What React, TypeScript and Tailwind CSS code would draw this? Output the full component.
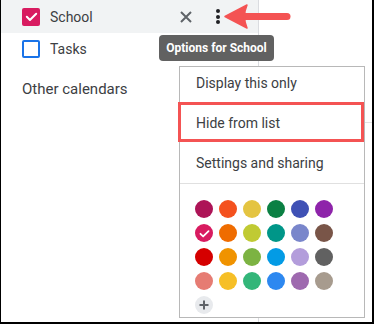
import React from "react";

const swatches = [
  "#ad1457", "#f4511e", "#e4c441", "#0b8043", "#3f51b5", "#8e24aa",
  "#d81b60", "#ef6c00", "#c0ca33", "#009688", "#7986cb", "#795548",
  "#d50000", "#f09300", "#7cb342", "#039be5", "#b39ddb", "#616161",
  "#e67c73", "#f6bf26", "#33b679", "#2d88f0", "#9e69af", "#a79b8e",
];

function Check({ size = 14 }: { size?: number }) {
  return (
    <svg width={size} height={size} viewBox="0 0 24 24" fill="none">
      <path d="M4.5 12.5l5 5L19.5 7.5" stroke="white" strokeWidth="3.2" strokeLinecap="round" strokeLinejoin="round" />
    </svg>
  );
}

export default function App() {
  return (
    <div className="relative w-[374px] h-[324px] overflow-hidden bg-white border-l border-r-2 border-b-2 border-black font-['Roboto',sans-serif] text-[#3c4043]">
      <div className="flex h-full">
        <div className="w-[257px] flex flex-col">
          <div className="h-[33px] bg-[#f1f3f4] flex items-center pl-[21px] pr-[28px]">
            <div className="w-[18px] h-[18px] rounded-[2px] bg-[#d81b60] flex items-center justify-center">
              <Check size={15} />
            </div>
            <span className="ml-[10px] flex-1 text-[14px] leading-[20px]">School</span>
            <div className="w-[24px] h-[24px] flex items-center justify-center">
              <svg width="12" height="12" viewBox="0 0 12 12">
                <path d="M1 1L11 11M11 1L1 11" stroke="#5f6368" strokeWidth="2" />
              </svg>
            </div>
            <div className="ml-[8px] w-[24px] h-[24px] flex flex-col items-center justify-center gap-[1.5px]">
              <span className="w-[4px] h-[4px] rounded-full bg-[#202124]" />
              <span className="w-[4px] h-[4px] rounded-full bg-[#202124]" />
              <span className="w-[4px] h-[4px] rounded-full bg-[#202124]" />
            </div>
          </div>
          <div className="h-[32px] flex items-center pl-[21px]">
            <div className="w-[18px] h-[18px] rounded-[2px] border-2 border-[#1a73e8]" />
            <span className="ml-[10px] text-[14px] leading-[20px]">Tasks</span>
          </div>
          <div className="pt-[14px] pl-[21px] text-[15px] leading-[20px] text-[#3c4043]">Other calendars</div>
        </div>
        <div className="flex-1 flex flex-col border-l border-[#dadce0]">
          <div className="h-[123px] border-b border-[#e3e3e3]" />
        </div>
      </div>

      {/* tooltip */}
      <div className="absolute left-[158px] top-[35px] w-[115px] h-[26px] rounded-[4px] bg-[#616161] text-white text-[12px] font-bold flex items-center justify-center">
        Options for School
      </div>

      {/* red arrow */}
      <svg className="absolute left-[222px] top-[3px]" width="72" height="28" viewBox="0 0 72 28">
        <line x1="20" y1="13.5" x2="64" y2="13.5" stroke="#f45353" strokeWidth="7" strokeLinecap="round" />
        <path d="M2 13.5 L24 2 Q19 13.5 24 25 Z" fill="#f45353" stroke="#f45353" strokeWidth="1.5" strokeLinejoin="round" />
      </svg>

      {/* menu */}
      <div className="absolute left-[178px] top-[66px] w-[186px] h-[252px] bg-white border border-[#b8b8b8] flex flex-col">
        <div className="pl-[16px] pt-[6px] pb-[10px] text-[14px] leading-[20px] text-[#3c4043]">Display this only</div>
        <div className="pl-[16px] py-[10px] text-[14px] leading-[20px] text-[#3c4043]">Hide from list</div>
        <div className="pl-[16px] py-[10px] text-[14px] leading-[20px] text-[#3c4043]">Settings and sharing</div>
        <div className="h-px bg-[#e0e0e0]" />
        <div className="pl-[15px] pt-[16px] grid grid-cols-[repeat(6,18px)] gap-[6px]">
          {swatches.map((c, i) => (
            <div key={i} className="w-[18px] h-[18px] rounded-full flex items-center justify-center" style={{ backgroundColor: c }}>
              {i === 6 ? <Check size={13} /> : null}
            </div>
          ))}
          <div className="w-[18px] h-[18px] rounded-full bg-[#e8eaed] flex items-center justify-center">
            <svg width="10" height="10" viewBox="0 0 10 10">
              <path d="M5 0.5V9.5M0.5 5H9.5" stroke="#5f6368" strokeWidth="2" />
            </svg>
          </div>
        </div>
      </div>

      {/* highlight box */}
      <div className="absolute left-[177px] top-[102px] w-[186px] h-[40px] border-[3px] border-[#f45353]" />
    </div>
  );
}
